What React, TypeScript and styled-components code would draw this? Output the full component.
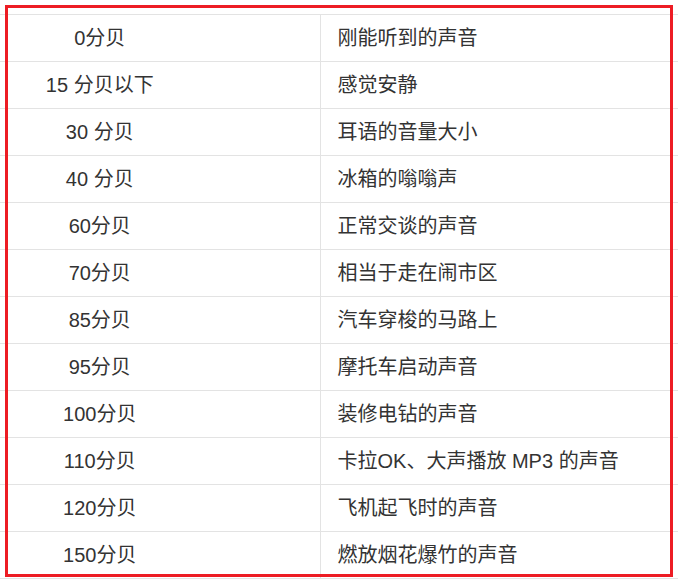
import styled, { createGlobalStyle } from "styled-components";

const GlobalStyle = createGlobalStyle`
  html, body {
    margin: 0;
    padding: 0;
    background: #ffffff;
    overflow: hidden;
  }
  body {
    font-family: "Liberation Sans", "Noto Sans CJK SC", sans-serif;
  }
`;

const Page = styled.div`
  position: relative;
  width: 678px;
  height: 582px;
  padding-top: 14px;
  box-sizing: border-box;
`;

const Table = styled.table`
  width: 100%;
  border-collapse: collapse;
  table-layout: fixed;
  border-top: 1px solid #e3e3e3;
  color: #333333;
  font-size: 20px;
`;

const Row = styled.tr`
  height: 47px;
  border-bottom: 1px solid #e3e3e3;
`;

const LevelCell = styled.td`
  width: 320px;
  padding: 0 120px 4px 0;
  text-align: center;
  border-right: 1px solid #e3e3e3;
  box-sizing: border-box;
  white-space: nowrap;
`;

const DescCell = styled.td`
  padding: 0 0 4px 17px;
  text-align: left;
  white-space: nowrap;
`;

const Highlight = styled.div`
  position: absolute;
  left: 5px;
  top: 5px;
  width: 668px;
  height: 572px;
  border: 3px solid #ed1c24;
  box-sizing: border-box;
  pointer-events: none;
`;

const rows: [string, string][] = [
  ["0分贝", "刚能听到的声音"],
  ["15 分贝以下", "感觉安静"],
  ["30 分贝", "耳语的音量大小"],
  ["40 分贝", "冰箱的嗡嗡声"],
  ["60分贝", "正常交谈的声音"],
  ["70分贝", "相当于走在闹市区"],
  ["85分贝", "汽车穿梭的马路上"],
  ["95分贝", "摩托车启动声音"],
  ["100分贝", "装修电钻的声音"],
  ["110分贝", "卡拉OK、大声播放 MP3 的声音"],
  ["120分贝", "飞机起飞时的声音"],
  ["150分贝", "燃放烟花爆竹的声音"],
];

const App = () => {
  return (
    <>
      <GlobalStyle />
      <Page>
        <Table>
          <tbody>
            {rows.map(([level, desc]) => (
              <Row key={level}>
                <LevelCell>{level}</LevelCell>
                <DescCell>{desc}</DescCell>
              </Row>
            ))}
          </tbody>
        </Table>
        <Highlight />
      </Page>
    </>
  );
};

export default App;
